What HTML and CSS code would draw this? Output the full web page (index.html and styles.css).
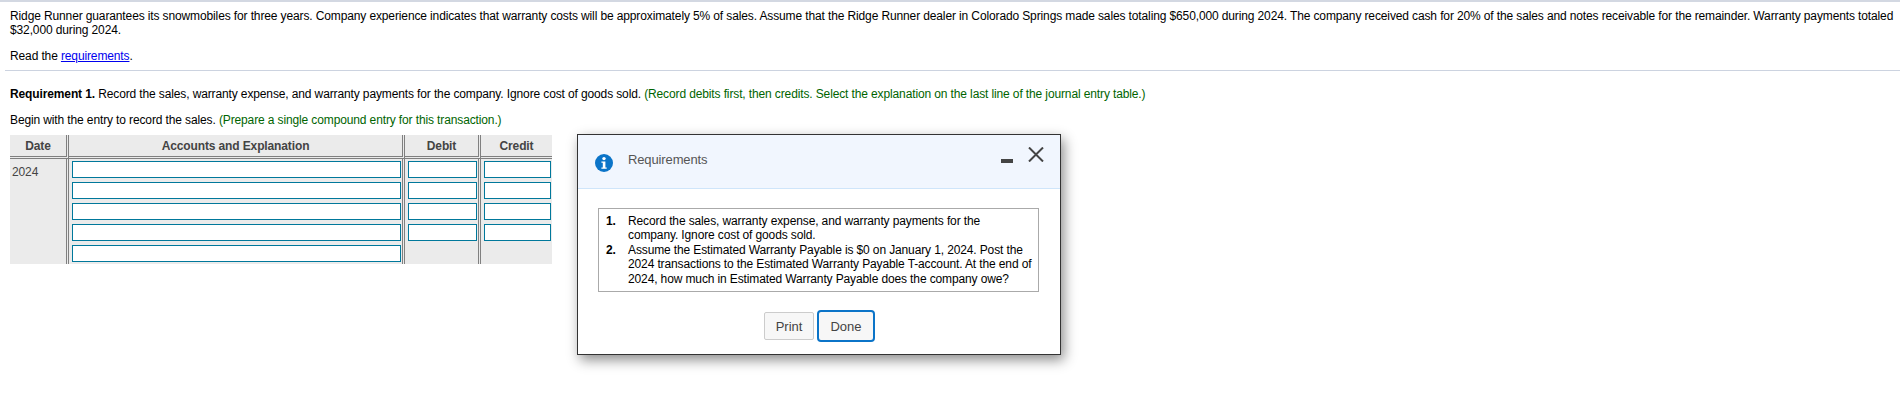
FILE: index.html
```html
<!DOCTYPE html>
<html lang="en">
<head>
    <meta charset="UTF-8">
    <title>Requirements</title>
    <link rel="stylesheet" href="styles.css">
</head>
<body>
    <div class="question">
        <p class="intro">Ridge Runner guarantees its snowmobiles for three years. Company experience indicates that warranty costs will be approximately 5% of sales. Assume that the Ridge Runner dealer in Colorado Springs made sales totaling $650,000 during 2024. The company received cash for 20% of the sales and notes receivable for the remainder. Warranty payments totaled $32,000 during 2024.</p>
        <p class="read">Read the <a href="#">requirements</a>.</p>
    </div>
    <hr class="divider">
    <div class="question">
        <p class="req"><b>Requirement 1.</b> Record the sales, warranty expense, and warranty payments for the company. Ignore cost of goods sold. <span class="hint">(Record debits first, then credits. Select the explanation on the last line of the journal entry table.)</span></p>
        <p class="begin">Begin with the entry to record the sales. <span class="hint">(Prepare a single compound entry for this transaction.)</span></p>
        <table class="journal">
            <thead>
                <tr>
                    <th class="col-date">Date</th>
                    <th class="col-acct">Accounts and Explanation</th>
                    <th class="col-debit">Debit</th>
                    <th class="col-credit">Credit</th>
                </tr>
            </thead>
            <tbody>
                <tr>
                    <td class="date-cell">2024</td>
                    <td><input class="entry" type="text"></td>
                    <td><input class="entry" type="text"></td>
                    <td class="last"><input class="entry" type="text"></td>
                </tr>
                <tr>
                    <td></td>
                    <td><input class="entry" type="text"></td>
                    <td><input class="entry" type="text"></td>
                    <td class="last"><input class="entry" type="text"></td>
                </tr>
                <tr>
                    <td></td>
                    <td><input class="entry" type="text"></td>
                    <td><input class="entry" type="text"></td>
                    <td class="last"><input class="entry" type="text"></td>
                </tr>
                <tr>
                    <td></td>
                    <td><input class="entry" type="text"></td>
                    <td><input class="entry" type="text"></td>
                    <td class="last"><input class="entry" type="text"></td>
                </tr>
                <tr class="last-row">
                    <td></td>
                    <td><input class="entry" type="text"></td>
                    <td></td>
                    <td class="last"></td>
                </tr>
            </tbody>
        </table>
    </div>

    <div class="modal">
        <div class="modal-head">
            <svg class="info-icon" width="18" height="18" viewBox="0 0 18 18">
                <circle cx="9" cy="9" r="9" fill="#0b74c8"/>
                <circle cx="9" cy="4.6" r="1.7" fill="#fff"/>
                <path d="M6.4 7.4h4v6h1.3v1.4H6.4v-1.4h1.4V8.8H6.4z" fill="#fff"/>
            </svg>
            <span class="modal-title">Requirements</span>
            <span class="minimize"></span>
            <svg class="close-icon" width="16" height="15" viewBox="0 0 16 15">
                <path d="M1 0.5L15 14.5M15 0.5L1 14.5" stroke="#444" stroke-width="2" fill="none"/>
            </svg>
        </div>
        <div class="modal-body">
            <ol class="req-list">
                <li><b>1.</b><span>Record the sales, warranty expense, and warranty payments for the company. Ignore cost of goods sold.</span></li>
                <li><b>2.</b><span>Assume the Estimated Warranty Payable is $0 on January 1, 2024. Post the 2024 transactions to the Estimated Warranty Payable T-account. At the end of 2024, how much in Estimated Warranty Payable does the company owe?</span></li>
            </ol>
            <div class="modal-btns">
                <button class="btn">Print</button>
                <button class="btn btn-done">Done</button>
            </div>
        </div>
    </div>
</body>
</html>
```

FILE: styles.css
```css
body {
    margin: 0;
    border-top: 2px solid #d3d8e2;
    background-color: #fff;
    font-family: "Liberation Sans", Arial, sans-serif;
    font-size: 12px;
    line-height: 14px;
    letter-spacing: -0.125px;
    color: #000;
}
p {
    margin: 0;
}
.question {
    padding: 0 0 0 10px;
}
.intro {
    padding-top: 7px;
    width: 1888px;
}
.read {
    margin-top: 12px;
}
.read a {
    color: #0000ee;
}
.divider {
    margin: 7px 0 0 5px;
    border: none;
    border-top: 1px solid #ccd3e0;
    height: 0;
}
.req {
    margin-top: 16px;
}
.begin {
    margin-top: 12px;
}
.hint {
    color: #006400;
}
.journal {
    margin-top: 8px;
    border-collapse: separate;
    border-spacing: 0;
    table-layout: fixed;
    width: 542px;
    background-color: #ebebeb;
    color: #444;
}
.journal th {
    height: 21px;
    padding: 0;
    font-size: 12px;
    font-weight: bold;
    color: #444;
    border-right: 3px double #808080;
    border-bottom: 3px double #808080;
}
.journal th:last-child {
    border-right: none;
}
.col-date {
    width: 56px;
}
.col-acct {
    width: 333px;
}
.col-debit {
    width: 73px;
}
.journal td {
    padding: 0;
    border-right: 3px double #808080;
    vertical-align: top;
}
.journal td.last {
    border-right: none;
}
.journal tbody tr:first-child td {
    padding-top: 2px;
}
.journal tbody tr:first-child .date-cell {
    padding: 6px 0 0 2px;
}
.entry {
    display: block;
    box-sizing: border-box;
    height: 17px;
    width: calc(100% - 4px);
    margin: 0 1px 4px 3px;
    padding: 0;
    border: 1px solid #00789b;
    background-color: #fff;
}
.journal .last-row .entry {
    margin-bottom: 2px;
}
.modal {
    position: absolute;
    left: 577px;
    top: 134px;
    width: 482px;
    height: 219px;
    border: 1px solid #333;
    background-color: #fff;
    box-shadow: 3px 5px 12px rgba(0, 0, 0, 0.45);
}
.modal-head {
    display: flex;
    align-items: center;
    height: 53px;
    padding-left: 17px;
    background-color: #f1f6fe;
    border-bottom: 1px solid #cfe5fa;
}
.info-icon {
    margin-top: 3px;
}
.modal-title {
    margin-left: 15px;
    margin-top: -3px;
    color: #555;
    font-size: 13px;
}
.minimize {
    margin-left: auto;
    margin-top: -1px;
    width: 12px;
    height: 4px;
    background-color: #444;
}
.close-icon {
    margin: -15px 16px 0 15px;
}
.modal-body {
    padding: 19px 21px 0 20px;
}
.req-list {
    margin: 0;
    padding: 5px 5px 5px 7px;
    border: 1px solid #aaa;
    line-height: 14.4px;
    list-style: none;
}
.req-list li {
    display: flex;
}
.req-list b {
    flex: 0 0 22px;
}
.modal-btns {
    display: flex;
    justify-content: center;
    align-items: center;
    gap: 3px;
    margin-top: 18px;
    padding-left: 2px;
}
.btn {
    height: 28px;
    width: 50px;
    padding: 0;
    border: 1px solid #ccc;
    border-radius: 2px;
    background-color: #f7f7f7;
    color: #444;
    font-family: "Liberation Sans", Arial, sans-serif;
    font-size: 13px;
}
.btn-done {
    height: 32px;
    width: 58px;
    border: 2px solid #0b74c8;
    border-radius: 4px;
}
```
